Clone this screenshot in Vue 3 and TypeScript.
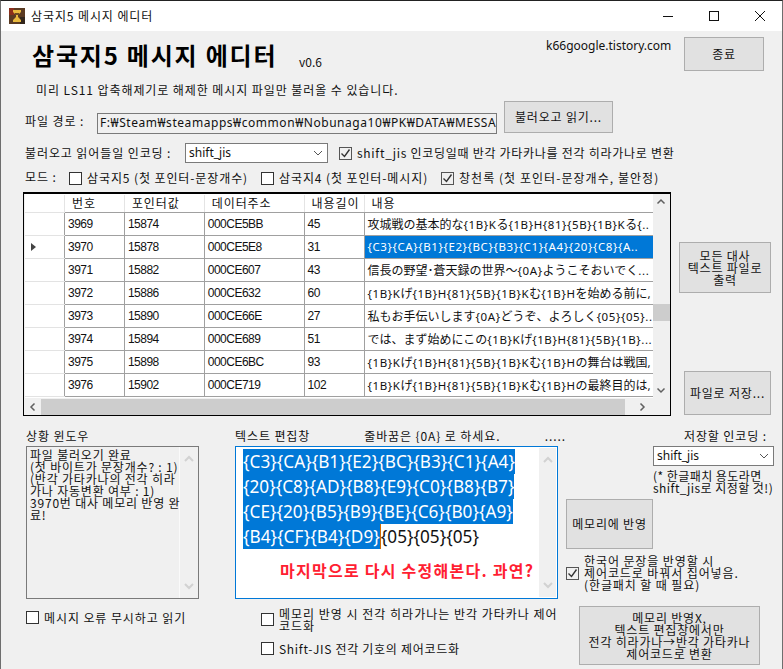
<template>
  <div class="window">
    <div class="titlebar">
      <svg class="app-icon" width="16" height="16" viewBox="0 0 16 16">
        <rect width="16" height="16" fill="#5a3a22" />
        <rect x="0" y="0" width="5" height="7" fill="#8a2f1c" />
        <rect x="11" y="9" width="5" height="7" fill="#33261c" />
        <path d="M4 2h8v2l-3 3v2l3 3v2H4v-2l3-3V7L4 4z" fill="#e8b93e" />
        <rect x="6" y="5" width="4" height="2" fill="#6b4a22" />
      </svg>
      <span class="title-text">삼국지5 메시지 에디터</span>
      <div class="controls">
        <svg width="46" height="30" viewBox="0 0 46 30"><path d="M18 15.5h10" stroke="#111" fill="none" /></svg>
        <svg width="46" height="30" viewBox="0 0 46 30"><rect x="18.5" y="10.5" width="9" height="9" stroke="#111" fill="none" /></svg>
        <svg width="46" height="30" viewBox="0 0 46 30"><path d="M18 10l10 10M28 10L18 20" stroke="#111" fill="none" /></svg>
      </div>
    </div>

    <div class="client">
      <div class="head-row">
        <h1 class="app-title">삼국지5 메시지 에디터</h1>
        <span class="version">v0.6</span>
        <span class="site">k66google.tistory.com</span>
        <button class="btn btn-quit">종료</button>
      </div>
      <p class="hint">미리 LS11 압축해제기로 해제한 메시지 파일만 불러올 수 있습니다.</p>

      <div class="path-row">
        <span class="lbl path-lbl">파일 경로 :</span>
        <div class="path-input">F:₩Steam₩steamapps₩common₩Nobunaga10₩PK₩DATA₩MESSA</div>
        <button class="btn btn-load">불러오고 읽기...</button>
      </div>

      <div class="enc-row">
        <span class="lbl enc-lbl">불러오고 읽어들일 인코딩 :</span>
        <div class="select enc-select">
          <span>shift_jis</span>
          <svg width="10" height="6" viewBox="0 0 10 6"><path d="M1 1l4 4 4-4" stroke="#555" fill="none" /></svg>
        </div>
        <label class="check enc-check"><i class="box on"><svg width="11" height="11" viewBox="0 0 11 11"><path d="M1.5 5.5l3 3 5-7" stroke="#333" fill="none" stroke-width="1.4" /></svg></i>shift_jis 인코딩일때 반각 가타카나를 전각 히라가나로 변환</label>
      </div>

      <div class="mode-row">
        <span class="lbl mode-lbl">모드 :</span>
        <label class="check m1"><i class="box"></i>삼국지5 (첫 포인터-문장개수)</label>
        <label class="check m2"><i class="box"></i>삼국지4 (첫 포인터-메시지)</label>
        <label class="check m3"><i class="box on"><svg width="11" height="11" viewBox="0 0 11 11"><path d="M1.5 5.5l3 3 5-7" stroke="#333" fill="none" stroke-width="1.4" /></svg></i>창천록 (첫 포인터-문장개수, 불안정)</label>
      </div>

      <div class="grid-row">
        <div class="grid">
          <div class="grid-main">
            <div class="grid-view">
              <div class="tr th">
                <div class="td c0"></div>
                <div class="td c1">번호</div>
                <div class="td c2">포인터값</div>
                <div class="td c3">데이터주소</div>
                <div class="td c4">내용길이</div>
                <div class="td c5">내용</div>
              </div>
              <div v-for="r in rows" :key="r.no" class="tr">
                <div class="td c0"><i v-if="r.selected" class="arrow"></i></div>
                <div class="td c1">{{ r.no }}</div>
                <div class="td c2">{{ r.ptr }}</div>
                <div class="td c3">{{ r.addr }}</div>
                <div class="td c4">{{ r.len }}</div>
                <div class="td c5" :class="{ sel: r.selected }">
                  <span v-for="(s, i) in segments(r.text)" :key="i" :class="s.ja ? 'ja' : 'code'">{{ s.text }}</span>
                </div>
              </div>
            </div>
            <div class="vscroll">
              <svg width="16" height="16" viewBox="0 0 16 16"><path d="M4.500 9.500L8 6l3.500 3.500" stroke="#606060" stroke-width="1.500" fill="none" /></svg>
              <div class="v-track"><div class="v-thumb"></div></div>
              <svg width="16" height="16" viewBox="0 0 16 16"><path d="M4.500 6.500L8 10l3.500-3.500" stroke="#606060" stroke-width="1.500" fill="none" /></svg>
            </div>
          </div>
          <div class="hscroll">
            <svg width="16" height="16" viewBox="0 0 16 16"><path d="M9.500 4.500L6 8l3.500 3.500" stroke="#606060" stroke-width="1.500" fill="none" /></svg>
            <div class="h-thumb"></div>
            <svg class="h-right" width="16" height="16" viewBox="0 0 16 16"><path d="M6.500 4.500L10 8l-3.500 3.500" stroke="#606060" stroke-width="1.500" fill="none" /></svg>
          </div>
        </div>
        <div class="side">
          <button class="btn btn-all">모든 대사<br />텍스트 파일로<br />출력</button>
          <button class="btn btn-save">파일로 저장...</button>
        </div>
      </div>

      <div class="bottom">
        <div class="col-status">
          <span class="lbl cap">상황 윈도우</span>
          <div class="status-box">
            <div class="status-text">파일 불러오기 완료<br />(첫 바이트가 문장개수? : 1)<br />(반각 가타카나의 전각 히라<br />가나 자동변환 여부 : 1)<br />3970번 대사 메모리 반영 완<br />료!</div>
            <div class="mini-scroll">
              <svg width="16" height="16" viewBox="0 0 16 16"><path d="M4 10l4-4 4 4" stroke="#d2d2d2" stroke-width="2" fill="none" /></svg>
              <svg width="16" height="16" viewBox="0 0 16 16"><path d="M4 6l4 4 4-4" stroke="#d2d2d2" stroke-width="2" fill="none" /></svg>
            </div>
          </div>
          <label class="check ignore"><i class="box"></i>메시지 오류 무시하고 읽기</label>
        </div>

        <div class="col-editor">
          <div class="cap-row">
            <span class="lbl">텍스트 편집창</span>
            <span class="lbl wrap-note">줄바꿈은 {0A} 로 하세요.</span>
            <span class="lbl dots">.....</span>
          </div>
          <div class="editor">
            <div class="editor-text">
              <div class="line"><span class="mark">{C3}{CA}{B1}{E2}{BC}{B3}{C1}{A4}</span></div>
              <div class="line"><span class="mark">{20}{C8}{AD}{B8}{E9}{C0}{B8}{B7}</span></div>
              <div class="line"><span class="mark">{CE}{20}{B5}{B9}{BE}{C6}{B0}{A9}</span></div>
              <div class="line"><span class="mark">{B4}{CF}{B4}{D9}</span><span class="caret">{05}{05}{05}</span></div>
              <div class="red-line">마지막으로 다시 수정해본다. 과연?</div>
            </div>
            <div class="mini-scroll edit-scroll">
              <svg width="16" height="16" viewBox="0 0 16 16"><path d="M4 10l4-4 4 4" stroke="#d2d2d2" stroke-width="2" fill="none" /></svg>
              <svg width="16" height="16" viewBox="0 0 16 16"><path d="M4 6l4 4 4-4" stroke="#d2d2d2" stroke-width="2" fill="none" /></svg>
            </div>
          </div>
          <label class="check multi c-a"><i class="box"></i><span>메모리 반영 시 전각 히라가나는 반각 가타카나 제어<br />코드화</span></label>
          <label class="check c-b"><i class="box"></i>Shift-JIS 전각 기호의 제어코드화</label>
        </div>

        <div class="col-right">
          <div class="save-enc">
            <span class="lbl save-lbl">저장할 인코딩 :</span>
            <div class="select save-select">
              <span>shift_jis</span>
              <svg width="10" height="6" viewBox="0 0 10 6"><path d="M1 1l4 4 4-4" stroke="#555" fill="none" /></svg>
            </div>
            <div class="save-note">(* 한글패치 용도라면<br />shift_jis로 지정할 것!)</div>
          </div>
          <button class="btn btn-apply">메모리에 반영</button>
          <label class="check multi c-c"><i class="box on"><svg width="11" height="11" viewBox="0 0 11 11"><path d="M1.5 5.5l3 3 5-7" stroke="#333" fill="none" stroke-width="1.4" /></svg></i><span>한국어 문장을 반영할 시<br />제어코드로 바꿔서 집어넣음.<br />(한글패치 할 때 필요)</span></label>
          <button class="btn btn-conv">메모리 반영X,<br />텍스트 편집창에서만<br />전각 히라가나→반각 가타카나<br />제어코드로 변환</button>
        </div>
      </div>
    </div>
  </div>
</template>

<script setup lang="ts">
interface Row {
  no: number
  ptr: number
  addr: string
  len: number
  text: string
  selected?: boolean
}

interface Segment {
  text: string
  ja: boolean
}

const rows: Row[] = [
  { no: 3969, ptr: 15874, addr: '000CE5BB', len: 45, text: '攻城戦の基本的な{1B}Kる{1B}H{81}{5B}{1B}Kる{..' },
  { no: 3970, ptr: 15878, addr: '000CE5E8', len: 31, text: '{C3}{CA}{B1}{E2}{BC}{B3}{C1}{A4}{20}{C8}{A..', selected: true },
  { no: 3971, ptr: 15882, addr: '000CE607', len: 43, text: '信長の野望･蒼天録の世界～{0A}ようこそおいでく...' },
  { no: 3972, ptr: 15886, addr: '000CE632', len: 60, text: '{1B}Kげ{1B}H{81}{5B}{1B}Kむ{1B}Hを始める前に,' },
  { no: 3973, ptr: 15890, addr: '000CE66E', len: 27, text: '私もお手伝いします{0A}どうぞ、よろしく{05}{05}..' },
  { no: 3974, ptr: 15894, addr: '000CE689', len: 51, text: 'では、まず始めにこの{1B}Kげ{1B}H{81}{5B}{1B}...' },
  { no: 3975, ptr: 15898, addr: '000CE6BC', len: 93, text: '{1B}Kげ{1B}H{81}{5B}{1B}Kむ{1B}Hの舞台は戦国,' },
  { no: 3976, ptr: 15902, addr: '000CE719', len: 102, text: '{1B}Kげ{1B}H{81}{5B}{1B}Kむ{1B}Hの最終目的は,' }
]

// control codes and japanese have different widths in the original grid font
function segments(text: string): Segment[] {
  const parts = text.match(/[\u3000-\u9fff\uff00-\uffef]+|[^\u3000-\u9fff\uff00-\uffef]+/g) || []
  return parts.map((p) => ({ text: p, ja: /[\u3000-\u9fff\uff00-\uffef]/.test(p) }))
}
</script>

<style>
html,
body {
  margin: 0;
  background: #f0f0f0;
}
</style>

<style scoped>
.window {
  width: 783px;
  height: 669px;
  box-sizing: border-box;
  border: 1px solid #6e6e6e;
  border-top-color: #222;
  border-bottom: 0;
  background: #f0f0f0;
  overflow: hidden;
  font-family: "Noto Sans CJK KR", "Noto Sans", sans-serif;
  font-size: 12px;
  line-height: 12px;
  color: #111;
}

.titlebar {
  height: 30px;
  background: #fff;
  display: flex;
  align-items: center;
  padding-left: 8px;
}

.title-text {
  margin-left: 6px;
  font-size: 12px;
  letter-spacing: 0.9px;
}

.controls {
  margin-left: auto;
  display: flex;
  margin-right: -1px;
}

.client {
  display: flex;
  flex-direction: column;
}

.head-row {
  display: flex;
  height: 40px;
  padding-top: 6px;
  align-items: flex-start;
}

.app-title {
  margin: 4px 0 0 31px;
  font-size: 24px;
  line-height: 28px;
  font-weight: 700;
  color: #000;
  letter-spacing: 1.8px;
  width: 267px;
  white-space: nowrap;
}

.version {
  margin-top: 19px;
  width: 247px;
}

.site {
  margin-top: 3px;
  width: 138px;
  font-family: "Noto Sans", sans-serif;
  white-space: nowrap;
}

.btn {
  background: #e1e1e1;
  border: 1px solid #adadad;
  font: inherit;
  color: #111;
  padding: 0;
  box-sizing: border-box;
  text-align: center;
  line-height: 12px;
  letter-spacing: 0.8px;
}

.btn-quit {
  width: 80px;
  height: 34px;
}

.hint {
  margin: 7px 0 0 35px;
  letter-spacing: 0.92px;
  white-space: nowrap;
}

.path-row {
  display: flex;
  margin-top: 5px;
  align-items: flex-start;
  height: 36px;
}

.lbl {
  white-space: nowrap;
  letter-spacing: 0.9px;
}

.path-lbl {
  margin: 14px 0 0 24px;
  width: 72px;
}

.path-input {
  width: 400px;
  height: 21px;
  margin-top: 12px;
  box-sizing: border-box;
  border: 1px solid #7a7a7a;
  background: #f0f0f0;
  padding: 3px 2px;
  overflow: hidden;
  white-space: nowrap;
  letter-spacing: 0.55px;
  font-family: "Noto Sans", "Noto Sans CJK KR", sans-serif;
}

.btn-load {
  margin-left: 7px;
  width: 109px;
  height: 32px;
}

.enc-row {
  display: flex;
  margin-top: 5px;
  height: 22px;
  align-items: center;
}

.enc-lbl {
  margin-left: 24px;
  width: 160px;
}

.select {
  box-sizing: border-box;
  border: 1px solid #7a7a7a;
  background: #fff;
  height: 20px;
  display: flex;
  align-items: center;
  justify-content: space-between;
  padding: 0 4px 0 3px;
  font-family: "Noto Sans", sans-serif;
}

.enc-select {
  width: 143px;
}

.check {
  display: flex;
  align-items: center;
  white-space: nowrap;
  letter-spacing: 0.9px;
}

.enc-check {
  margin-left: 11px;
  letter-spacing: 0.72px;
}

.box {
  width: 13px;
  height: 13px;
  box-sizing: border-box;
  border: 1px solid #333;
  background: #fff;
  margin-right: 5px;
  flex: none;
  display: block;
}

.box.on {
  border-color: #555;
  background: #f0f0f0;
}

.box svg {
  display: block;
}

.mode-row {
  display: flex;
  margin-top: 4px;
  height: 20px;
  align-items: center;
}

.mode-lbl {
  margin-left: 24px;
  width: 44px;
  margin-top: -2px;
}

.m1 {
  width: 192px;
}

.m2 {
  width: 180px;
}

.m3 {
  letter-spacing: 1.05px;
}

.grid-row {
  display: flex;
  margin-top: 4px;
  height: 224px;
}

.grid {
  margin-left: 22px;
  width: 648px;
  height: 224px;
  box-sizing: border-box;
  border: 1px solid #000;
  border-top-width: 2px;
  background: #f0f0f0;
  display: flex;
  flex-direction: column;
}

.grid-main {
  display: flex;
  height: 205px;
  overflow: hidden;
}

.grid-view {
  width: 630px;
  background: #fff;
  margin-left: 1px;
  overflow: hidden;
}

.tr {
  display: flex;
  height: 23px;
  box-sizing: border-box;
  border-bottom: 1px solid #a0a0a0;
}

.th {
  height: 18px;
  margin-top: 1px;
}

.td {
  box-sizing: border-box;
  border-right: 1px solid #a0a0a0;
  padding: 0 3px;
  line-height: 22px;
  white-space: nowrap;
  overflow: hidden;
  font-family: "Liberation Sans", "Noto Sans CJK JP", sans-serif;
  font-size: 12px;
  letter-spacing: -0.5px;
  color: #111;
}

.th .td {
  font-family: "Noto Sans CJK KR", sans-serif;
  font-size: 12px;
  line-height: 16px;
  border-right-color: #e4e4e4;
  padding-left: 7px;
  letter-spacing: 0.9px;
}

.c0 {
  width: 40px;
  position: relative;
  box-shadow: 0 1px 0 #e3e3e3;
}

.c1 {
  width: 60px;
}

.c2 {
  width: 80px;
}

.c3 {
  width: 100px;
}

.c4 {
  width: 60px;
}

.c5 {
  width: 289px;
  border-right: 0;
  letter-spacing: 0;
}

.ja {
  font-family: "Noto Sans CJK JP", sans-serif;
  letter-spacing: 0;
}

.code {
  font-family: "Noto Sans", sans-serif;
  font-size: 11.5px;
  letter-spacing: 0.6px;
}

.sel {
  background: #0078d7;
  color: #fff;
}

.arrow {
  position: absolute;
  left: 6px;
  top: 7px;
  width: 0;
  height: 0;
  border-left: 5px solid #444;
  border-top: 4px solid transparent;
  border-bottom: 4px solid transparent;
}

.vscroll {
  width: 17px;
  display: flex;
  flex-direction: column;
  background: #f0f0f0;
}

.v-track {
  flex: 1;
}

.v-thumb {
  height: 17px;
  background: #cdcdcd;
  margin-top: 94px;
}

.hscroll {
  height: 17px;
  margin-left: 1px;
  display: flex;
  align-items: center;
  background: #f0f0f0;
}

.hscroll svg {
  flex: none;
}

.h-thumb {
  width: 584px;
  height: 16px;
  background: #cdcdcd;
}

.h-right {
  margin-left: auto;
  margin-right: 20px;
}

.side {
  display: flex;
  flex-direction: column;
  align-items: flex-end;
  width: 100px;
}

.btn-all {
  width: 92px;
  height: 51px;
  margin-top: 50px;
  line-height: 12px;
}

.btn-save {
  width: 87px;
  height: 44px;
  margin-top: 78px;
}

.bottom {
  display: flex;
  margin-top: 14px;
}

.col-status {
  width: 234px;
  padding-left: 25px;
  box-sizing: border-box;
  display: flex;
  flex-direction: column;
}

.cap,
.cap-row {
  height: 16px;
  line-height: 12px;
}

.status-box {
  width: 173px;
  height: 153px;
  box-sizing: border-box;
  border: 1px solid #7a7a7a;
  background: #f0f0f0;
  display: flex;
}

.status-text {
  width: 153px;
  padding: 2px 3px;
  line-height: 12px;
  white-space: nowrap;
  box-sizing: border-box;
  border-right: 1px solid #fafafa;
  letter-spacing: 0.8px;
}

.mini-scroll {
  flex: 1;
  display: flex;
  flex-direction: column;
  justify-content: space-between;
  align-items: center;
  padding: 4px 0;
}

.ignore {
  margin-top: 12px;
}

.col-editor {
  width: 331px;
  display: flex;
  flex-direction: column;
}

.cap-row {
  display: flex;
}

.wrap-note {
  margin-left: 54px;
  width: 198px;
}

.editor {
  width: 323px;
  height: 153px;
  box-sizing: border-box;
  border: 1px solid #0078d7;
  background: #fff;
  display: flex;
}

.editor-text {
  flex: 1;
  padding: 2px 0 0 7px;
  font-family: "Noto Sans", sans-serif;
  font-size: 17.2px;
  line-height: 25px;
  overflow: hidden;
}

.line {
  height: 25px;
  white-space: nowrap;
}

.mark {
  background: #0078d7;
  color: #fff;
  display: inline-block;
  height: 25px;
}

.caret {
  border-left: 1px solid #d06a00;
  display: inline-block;
  height: 25px;
}

.red-line {
  margin-top: 9px;
  padding-left: 37px;
  font-family: "Noto Sans CJK KR", sans-serif;
  font-size: 16px;
  font-weight: 700;
  color: #ff1e32;
  white-space: nowrap;
  letter-spacing: 1.25px;
}

.edit-scroll {
  flex: none;
  width: 17px;
  background: #f0f0f0;
  margin: 1px;
}

.multi span {
  line-height: 11.500px;
}

.c-a {
  margin: 9px 0 0 26px;
  letter-spacing: 1px;
}

.c-b {
  margin: 11px 0 0 26px;
  letter-spacing: 0.7px;
}

.col-right {
  flex: 1;
  display: flex;
  flex-direction: column;
}

.save-enc {
  height: 69px;
  padding-left: 87px;
  box-sizing: border-box;
}

.save-lbl {
  display: block;
  height: 16px;
  width: 114px;
  text-align: right;
}

.save-select {
  width: 121px;
}

.save-note {
  margin-top: 4px;
  line-height: 12px;
  white-space: nowrap;
  letter-spacing: 0.45px;
}

.btn-apply {
  width: 87px;
  height: 50px;
}

.c-c {
  margin-top: 6px;
}

.c-c span {
  line-height: 12px;
}

.btn-conv {
  width: 181px;
  height: 59px;
  margin: 15px 0 0 13px;
}
</style>
